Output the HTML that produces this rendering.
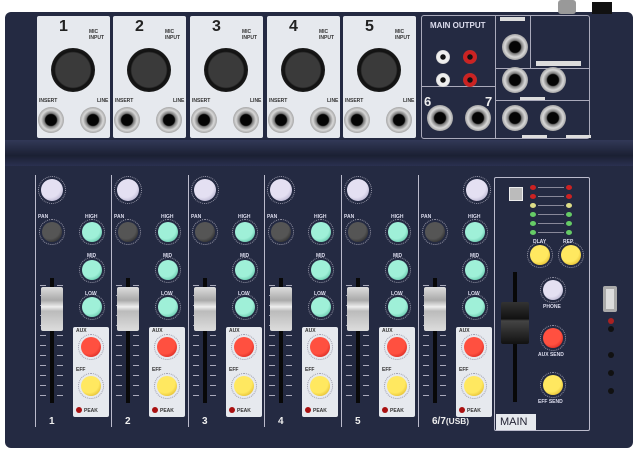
<!DOCTYPE html><html><head><style>
*{margin:0;padding:0;box-sizing:border-box}
body{width:640px;height:453px;background:#fff;position:relative;overflow:hidden;font-family:"Liberation Sans",sans-serif}
.a{position:absolute}
.k{position:absolute;border-radius:50%}
.t{position:absolute;font-size:5px;color:#dde;font-weight:bold}
.card{position:absolute;top:16px;width:73px;height:122px;background:#e6e9ee;border-radius:2px}
.num{position:absolute;top:2px;left:22px;font-size:16px;font-weight:bold;color:#222}
.xlr{position:absolute;left:14px;top:32px;width:44px;height:44px;border-radius:50%;background:radial-gradient(circle,#3a3a3a 0 55%,#111 60%,#2a2a2a 90%,#777 100%)}
.jk{position:absolute;width:26px;height:26px;border-radius:50%;background:radial-gradient(circle,#050505 0 30%,#777 36%,#d8d8d8 55%,#888 80%,#444 100%)}
.rca{position:absolute;width:14px;height:14px;border-radius:50%}
</style></head><body>
<div class="a" style="left:5px;top:12px;width:628px;height:436px;background:#242a42;border-radius:6px"></div>
<div class="a" style="left:5px;top:140px;width:628px;height:26px;background:linear-gradient(#323957,#1b2033 60%,#2a3050)"></div>
<div class="a" style="left:558px;top:0;width:18px;height:14px;background:#999;border-radius:3px"></div>
<div class="a" style="left:592px;top:2px;width:20px;height:12px;background:#111"></div>
<div class="a" style="left:421px;top:15px;width:169px;height:124px;border:1px solid #aab;border-radius:3px"></div>
<div class="a" style="left:421px;top:86px;width:74px;height:1px;background:#aab"></div>
<div class="a" style="left:495px;top:15px;width:1px;height:124px;background:#aab"></div>
<div class="a" style="left:495px;top:68px;width:95px;height:1px;background:#aab"></div>
<div class="a" style="left:495px;top:100px;width:95px;height:1px;background:#aab"></div>
<div class="a" style="left:530px;top:15px;width:1px;height:53px;background:#aab"></div>
<div class="t" style="left:430px;top:21px;font-size:8px">MAIN OUTPUT</div>
<div class="t" style="left:424px;top:94px;font-size:13px;color:#eee">6</div>
<div class="t" style="left:485px;top:94px;font-size:13px;color:#eee">7</div>
<div class="a" style="left:536px;top:61px;width:45px;height:5px;background:#ddd"></div>
<div class="a" style="left:520px;top:97px;width:25px;height:3px;background:#ddd"></div>
<div class="a" style="left:500px;top:17px;width:25px;height:4px;background:#ddd"></div>
<div class="a" style="left:522px;top:135px;width:25px;height:3px;background:#ddd"></div>
<div class="a" style="left:566px;top:135px;width:25px;height:3px;background:#ddd"></div>
<div id="g"></div>
<div class="a" style="left:494px;top:177px;width:96px;height:254px;border:1px solid #bbc;border-radius:2px"></div>
<div class="a" style="left:496px;top:414px;width:40px;height:16px;background:#e6e9ee;color:#223;font-size:11px;padding:2px 4px">MAIN</div>
<div class="a" style="left:509px;top:187px;width:14px;height:14px;background:#bbb;border:1px solid #eee"></div>
<div class="a" style="left:513px;top:272px;width:4px;height:130px;background:#080808"></div>
<div class="a" style="left:501px;top:302px;width:28px;height:42px;background:linear-gradient(#333,#111 40%,#444 45%,#111);border-radius:2px"></div>
<div class="a" style="left:603px;top:286px;width:14px;height:26px;background:#ddd;border-radius:2px;border:3px solid #aaa"></div>
<script>
var h='';
function jk(x,y,s){s=s||26;h+='<div class="jk" style="left:'+(x-s/2)+'px;top:'+(y-s/2)+'px;width:'+s+'px;height:'+s+'px"></div>'}
function kn(x,y,r,c,d){h+='<div class="k" style="left:'+(x-r-3)+'px;top:'+(y-r-3)+'px;width:'+(2*r+6)+'px;height:'+(2*r+6)+'px;border:1px dotted #99a"></div><div class="k" style="left:'+(x-r)+'px;top:'+(y-r)+'px;width:'+2*r+'px;height:'+2*r+'px;background:radial-gradient(circle at 40% 35%,'+c+' 0 55%,'+d+' 100%)"></div>'}
function tx(x,y,s,z,c){h+='<div class="t" style="left:'+x+'px;top:'+y+'px;'+(z?'font-size:'+z+'px;':'')+(c?'color:'+c:'')+'">'+s+'</div>'}
var cx=[37,113,190,267,343];
cx.forEach(function(x,i){h+='<div class="card" style="left:'+x+'px"><div class="num">'+(i+1)+'</div><div class="xlr"></div></div>';
tx(x+52,29,'MIC<br>INPUT',5,'#333');tx(x+2,98,'INSERT',5,'#333');tx(x+60,98,'LINE',5,'#333');
jk(x+14,120);jk(x+56,120);});
jk(515,47);jk(515,80);jk(553,80);jk(515,118);jk(553,118);jk(440,118);jk(478,118);
[[443,57,'#eee'],[443,80,'#eee'],[470,57,'#c22'],[470,80,'#c22']].forEach(function(r){h+='<div class="rca" style="left:'+(r[0]-7)+'px;top:'+(r[1]-7)+'px;background:radial-gradient(circle,#111 0 25%,'+r[2]+' 30% 60%,#555 100%)"></div>'});
var sx=[35,111,188,264,341,418];
sx.forEach(function(x,i){
h+='<div class="a" style="left:'+x+'px;top:175px;width:1px;height:252px;background:#bbc"></div>';
var gx=i<5?x+17:x+59;
kn(gx,190,11,'#e4e0f2','#9a95b8');
kn(x+17,232,10,'#555','#111');tx(x+3,214,'PAN');tx(x+50,214,'HIGH');
kn(x+57,232,10,'#9ff0d8','#3aa888');tx(x+52,253,'MID');kn(x+57,270,10,'#9ff0d8','#3aa888');
tx(x+50,291,'LOW');kn(x+57,307,10,'#9ff0d8','#3aa888');
h+='<div class="a" style="left:'+(x+38)+'px;top:327px;width:36px;height:90px;background:#e6e9ee;border-radius:2px"></div>';
kn(x+56,347,10,'#ff5040','#c01010');kn(x+56,386,10,'#ffe860','#d0a010');
tx(x+41,328,'AUX',5,'#333');tx(x+41,367,'EFF',5,'#333');
h+='<div class="k" style="left:'+(x+41)+'px;top:407px;width:6px;height:6px;background:#a11"></div>';tx(x+49,408,'PEAK',5,'#333');
h+='<div class="a" style="left:'+(x+15)+'px;top:278px;width:4px;height:125px;background:#080808"></div>';
for(var j=0;j<12;j++)h+='<div class="a" style="left:'+(x+5)+'px;top:'+(285+j*10)+'px;width:6px;height:1px;background:#aab"></div><div class="a" style="left:'+(x+22)+'px;top:'+(285+j*10)+'px;width:6px;height:1px;background:#aab"></div>';
h+='<div class="a" style="left:'+(x+6)+'px;top:287px;width:22px;height:44px;background:linear-gradient(#ddd,#aaa 30%,#eee 45%,#bbb 55%,#ddd);border-radius:2px"></div>';
tx(x+14,416,i<5?(i+1):'6/7<small>(USB)</small>',10,'#eee');
});
kn(540,255,10,'#ffe860','#d0a010');kn(571,255,10,'#ffe860','#d0a010');kn(553,290,10,'#e4e0f2','#9a95b8');
kn(553,338,10,'#ff5040','#c01010');kn(553,385,10,'#ffe860','#d0a010');
tx(533,239,'DLAY');tx(563,239,'REP');tx(543,304,'PHONE');tx(538,352,'AUX SEND');tx(538,399,'EFF SEND');
var lc=['#c22','#c22','#dd8','#6c6','#6c6','#6c6'];
lc.forEach(function(c,j){h+='<div class="k" style="left:530px;top:'+(185+j*9)+'px;width:6px;height:5px;background:'+c+'"></div><div class="k" style="left:566px;top:'+(185+j*9)+'px;width:6px;height:5px;background:'+c+'"></div><div class="a" style="left:538px;top:'+(187+j*9)+'px;width:26px;height:1px;background:#889"></div>'});
[318,326,352,370,388].forEach(function(y,j){h+='<div class="k" style="left:608px;top:'+y+'px;width:6px;height:6px;background:'+(j==0?'#a22':'#111')+'"></div>'});
document.getElementById('g').innerHTML=h;
</script>
</body></html>
